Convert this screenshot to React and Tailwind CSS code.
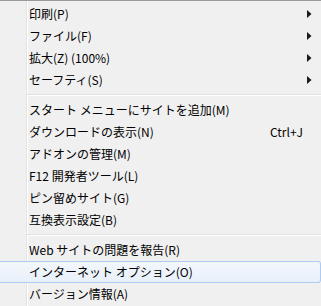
import React from "react";

const font = { fontFamily: '"Noto Sans CJK JP", "Noto Sans", sans-serif' };

function Arrow() {
  return (
    <svg width="5" height="8" viewBox="0 0 5 8" className="ml-auto mr-[9px] shrink-0">
      <polygon points="0,0 4.5,4 0,8" fill="#1a1a1a" />
    </svg>
  );
}

function Row({ label, shortcut, sub, active }) {
  if (active) {
    return (
      <div className="flex h-[22px] items-center rounded-r-[3px] border border-l-0 border-[#aeccf1] bg-[linear-gradient(to_bottom,#f3f7fc,#e8f0fa)] pl-[29px]">
        <span className="whitespace-nowrap">{label}</span>
      </div>
    );
  }
  return (
    <div className="flex h-[22px] items-center pl-[29px]">
      <span className="whitespace-nowrap">{label}</span>
      {shortcut && <span className="ml-auto mr-[18px] whitespace-nowrap">{shortcut}</span>}
      {sub && <Arrow />}
    </div>
  );
}

function Sep() {
  return (
    <div className="flex h-[8px] flex-col justify-center pl-[27px]">
      <div className="h-[2px] border-t border-b border-t-[#e0e0e0] border-b-white" />
    </div>
  );
}

export default function App() {
  return (
    <div
      style={font}
      className="h-[306px] w-[321px] overflow-hidden border-t border-[#9a9a9a] bg-[#f0f0f0] bg-[linear-gradient(to_right,transparent_26px,#e2e3e3_26px,#e2e3e3_27px,#ffffff_27px,#ffffff_28px,transparent_28px)] pt-[2px] text-[12px] leading-none text-black"
    >
      <Row label="印刷(P)" sub />
      <Row label="ファイル(F)" sub />
      <Row label="拡大(Z) (100%)" sub />
      <Row label="セーフティ(S)" sub />
      <Sep />
      <Row label="スタート メニューにサイトを追加(M)" />
      <Row label="ダウンロードの表示(N)" shortcut="Ctrl+J" />
      <Row label="アドオンの管理(M)" />
      <Row label="F12 開発者ツール(L)" />
      <Row label="ピン留めサイト(G)" />
      <Row label="互換表示設定(B)" />
      <Sep />
      <Row label="Web サイトの問題を報告(R)" />
      <Row label="インターネット オプション(O)" active />
      <Row label="バージョン情報(A)" />
    </div>
  );
}
